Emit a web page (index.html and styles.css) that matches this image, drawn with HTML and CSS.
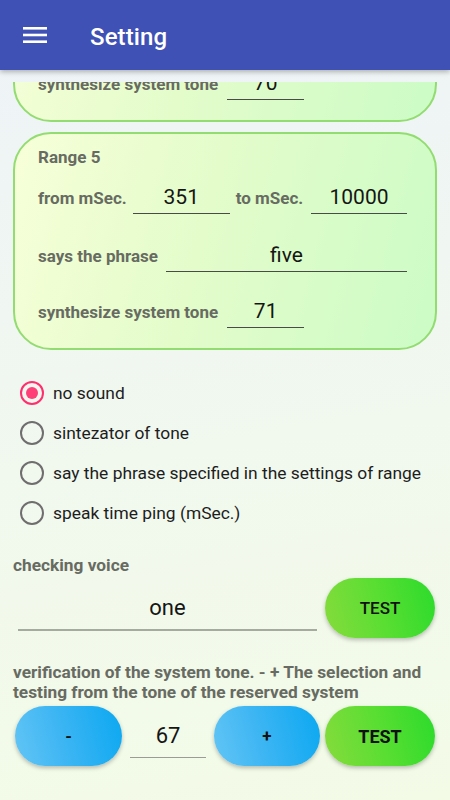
FILE: index.html
```html
<!DOCTYPE html>
<html lang="en">
<head>
<meta charset="utf-8">
<title>Setting</title>
<link rel="stylesheet" href="styles.css">
</head>
<body>
<header class="appbar">
  <svg class="menu" width="24" height="18" viewBox="0 0 24 18" aria-hidden="true">
    <rect x="0" y="1" width="24" height="2.6" fill="#fff"/>
    <rect x="0" y="7.7" width="24" height="2.6" fill="#fff"/>
    <rect x="0" y="14.4" width="24" height="2.6" fill="#fff"/>
  </svg>
  <h1 class="title">Setting</h1>
</header>
<main class="scroll">
  <section class="card card-cut">
    <div class="row row-tone">
      <span class="lbl">synthesize system tone</span>
      <span class="field f-tone">70</span>
    </div>
  </section>
  <section class="card">
    <div class="card-title">Range 5</div>
    <div class="row row-first">
      <span class="lbl">from mSec.</span>
      <span class="field f-from">351</span>
      <span class="lbl lbl-to">to mSec.</span>
      <span class="field f-to">10000</span>
    </div>
    <div class="row row-phrase">
      <span class="lbl">says the phrase</span>
      <span class="field f-phrase">five</span>
    </div>
    <div class="row row-tone">
      <span class="lbl">synthesize system tone</span>
      <span class="field f-tone">71</span>
    </div>
  </section>

  <div class="radios">
    <div class="radio checked"><span class="dot"></span><span>no sound</span></div>
    <div class="radio"><span class="dot"></span><span>sintezator of tone</span></div>
    <div class="radio"><span class="dot"></span><span>say the phrase specified in the settings of range</span></div>
    <div class="radio"><span class="dot"></span><span>speak time ping (mSec.)</span></div>
  </div>

  <div class="section-label">checking voice</div>
  <div class="voice-row">
    <span class="big-field voice-field">one</span>
    <button class="btn btn-green">TEST</button>
  </div>

  <p class="section-label verify">verification of the system tone. - + The selection and testing from the tone of the reserved system</p>
  <div class="tone-row">
    <button class="btn btn-blue btn-minus">-</button>
    <span class="big-field tone-field">67</span>
    <button class="btn btn-blue btn-plus">+</button>
    <button class="btn btn-green btn-bold">TEST</button>
  </div>
</main>
</body>
</html>
```

FILE: styles.css
```css
* { box-sizing: border-box; }
html, body {
  margin: 0;
  padding: 0;
  width: 450px;
  height: 800px;
  overflow: hidden;
}
body {
  font-family: Roboto, "Noto Sans", "Liberation Sans", sans-serif;
  background: linear-gradient(172deg, #eef3f8 0%, #f1f8ee 55%, #f3fbe7 100%);
  color: #1f1f1f;
}
.appbar {
  position: relative;
  z-index: 2;
  height: 70px;
  background: #3f51b5;
  display: flex;
  align-items: center;
  padding-left: 23px;
  box-shadow: 0 2px 5px rgba(0, 0, 0, 0.28);
}
.menu { display: block; margin-top: -1px; }
.title {
  margin: 3px 0 0 43px;
  font-size: 24px;
  font-weight: 500;
  color: #fff;
  letter-spacing: 0.1px;
}
.scroll {
  margin-top: 12px;
  height: 718px;
  overflow: hidden;
  padding: 0 13px;
}
.card {
  height: 218px;
  border: 2px solid #93dc72;
  border-radius: 38px;
  background: linear-gradient(105deg, #f7ffd9 0%, #e3fcca 45%, #ccfcc6 100%);
  padding: 13px 28px 0 23px;
}
.card + .card { margin-top: 10px; }
.card-cut {
  margin-top: -178px;
  display: flex;
  flex-direction: column;
  justify-content: flex-end;
  padding-bottom: 20px;
}
.card-title {
  font-size: 17px;
  font-weight: 700;
  color: #676b62;
  line-height: 20px;
}
.row {
  display: flex;
  align-items: center;
  height: 33px;
}
.row-first { margin-top: 14px; }
.row-phrase { margin-top: 25px; }
.row-tone { margin-top: 23px; }
.lbl {
  font-size: 17px;
  font-weight: 700;
  color: #676b62;
  white-space: nowrap;
}
.field {
  height: 33px;
  line-height: 32px;
  border-bottom: 1px solid #4a4a48;
  font-size: 21px;
  color: #151515;
  text-align: center;
}
.f-from { width: 97px; margin-left: 6px; }
.lbl-to { margin-left: 6px; }
.f-to { width: 96px; margin-left: auto; }
.f-phrase { flex: 1; margin-left: 8px; }
.f-tone { width: 77px; margin-left: 9px; }

.radios { margin-top: 23px; }
.radio {
  display: flex;
  align-items: center;
  height: 40px;
  font-size: 17.4px;
  color: #1d1d1d;
  padding-left: 7px;
}
.dot {
  width: 24px;
  height: 24px;
  border-radius: 50%;
  border: 2.5px solid #6e6e6e;
  margin-right: 9px;
  position: relative;
  flex: none;
}
.radio.checked .dot { border-color: #ff2f6e; }
.radio.checked .dot::after {
  content: "";
  position: absolute;
  left: 3.5px;
  top: 3.5px;
  width: 12px;
  height: 12px;
  border-radius: 50%;
  background: #ff3f78;
}
.section-label {
  margin: 22px 0 0;
  font-size: 17.3px;
  font-weight: 700;
  color: #676b62;
  line-height: 20px;
}
.voice-row {
  display: flex;
  align-items: center;
  height: 60px;
  margin-top: 3px;
}
.big-field {
  height: 45px;
  line-height: 43px;
  font-size: 22px;
  text-align: center;
  color: #151515;
}
.voice-field {
  width: 299px;
  margin-left: 5px;
  border-bottom: 2px solid #a6ab9f;
}
.btn {
  border: none;
  height: 60px;
  width: 110px;
  border-radius: 30px;
  font-family: inherit;
  font-size: 17px;
  font-weight: 500;
  color: #111;
  box-shadow: 0 2px 4px rgba(0, 0, 0, 0.25);
  padding: 0;
}
.btn-green {
  margin-left: 8px;
  background: linear-gradient(75deg, #86db3c 0%, #5ade32 50%, #2bdb2c 100%);
}
.btn-blue {
  background: linear-gradient(75deg, #63c5f5 0%, #3cb5f3 45%, #0ba8f1 100%);
  font-weight: 700;
}
.verify { margin-top: 24px; }
.tone-row {
  display: flex;
  align-items: center;
  height: 60px;
  margin-top: 4px;
}
.btn-minus { width: 107px; margin-left: 2px; }
.tone-field {
  width: 76px;
  height: 44px;
  margin-left: 8px;
  border-bottom: 1.5px solid #9a9c95;
}
.btn-plus { width: 106px; margin-left: 8px; }
.btn-bold { margin-left: 5px; font-weight: 700; font-size: 18px; }
```
